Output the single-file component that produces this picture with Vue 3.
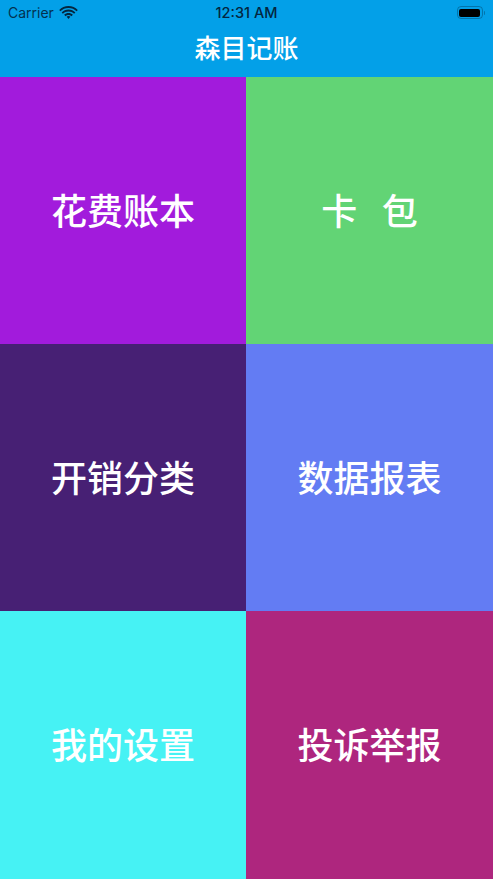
<script setup>
const tiles = [
  { id: 1, label: '花费账本', color: '#a21bdc' },
  { id: 2, label: '卡   包', color: '#62d475' },
  { id: 3, label: '开销分类', color: '#472074' },
  { id: 4, label: '数据报表', color: '#637cf3' },
  { id: 5, label: '我的设置', color: '#46f2f4' },
  { id: 6, label: '投诉举报', color: '#ae267e' },
]
</script>

<template>
  <div class="page">
    <header class="top">
      <div class="status-bar">
        <div class="status-left">
          <span class="carrier">Carrier</span>
          <svg class="wifi" viewBox="0 0 20 14" width="19" height="13">
            <path d="M10 2.2c-3.4 0-6.5 1.3-8.8 3.5L0 4.3C2.6 1.7 6.1 0 10 0s7.4 1.7 10 4.3l-1.2 1.400C16.500 3.500 13.400 2.200 10 2.200z" fill="#04263f" />
            <path d="M10 6c-2.300 0-4.400.9-6 2.400L2.600 6.900C4.600 5 7.200 3.800 10 3.800s5.400 1.200 7.400 3.100L16 8.400C14.400 6.900 12.300 6 10 6z" fill="#04263f" />
            <path d="M10 7.600c1.800 0 3.400.7 4.700 1.900l-1.500 1.600c-.9-.8-2-1.300-3.200-1.300s-2.300.5-3.200 1.300L5.300 9.500C6.600 8.300 8.200 7.600 10 7.600z" fill="#04263f" />
            <path d="M10 10.800c.8 0 1.500.3 2 .8L10 14l-2-2.400c.5-.5 1.200-.8 2-.8z" fill="#04263f" />
          </svg>
        </div>
        <span class="time">12:31 AM</span>
        <div class="battery-wrap">
          <div class="battery">
            <span class="battery-fill"></span>
          </div>
          <span class="battery-nub"></span>
        </div>
      </div>
      <h1 class="title">森目记账</h1>
    </header>

    <main class="grid">
      <div v-for="tile in tiles" :key="tile.id" class="tile" :style="{ background: tile.color }">
        {{ tile.label }}
      </div>
    </main>
  </div>
</template>

<style scoped>
.page {
  width: 493px;
  height: 879px;
  display: flex;
  flex-direction: column;
  overflow: hidden;
  font-family: "Noto Sans CJK SC", "Noto Sans", sans-serif;
}

.top {
  height: 77px;
  flex-shrink: 0;
  background: #03a0e8;
  display: flex;
  flex-direction: column;
}

.status-bar {
  height: 25px;
  padding: 0 8px;
  display: grid;
  grid-template-columns: 1fr auto 1fr;
  align-items: center;
  color: #04263f;
  font-family: Inter, "Liberation Sans", sans-serif;
  font-size: 14px;
}
.status-left { display: flex; align-items: center; gap: 5px; }
.carrier { font-weight: 400; opacity: 0.9; }
.wifi { margin-top: -1px; }
.time { font-size: 14.5px; font-weight: 500; color: #04263f; }

.battery-wrap {
  justify-self: end;
  display: flex;
  align-items: center;
  gap: 1px;
}
.battery {
  width: 26px;
  height: 13px;
  border: 1.5px solid rgba(4, 38, 63, 0.35);
  border-radius: 4px;
  padding: 1.5px;
  box-sizing: border-box;
}
.battery-fill {
  display: block;
  height: 100%;
  background: #000;
  border-radius: 2px;
}
.battery-nub {
  width: 1.5px;
  height: 4px;
  background: rgba(4, 38, 63, 0.35);
  border-radius: 0 1px 1px 0;
}

.title {
  margin: 0;
  flex: 1;
  display: flex;
  align-items: center;
  justify-content: center;
  padding-bottom: 8px;
  color: #fff;
  font-size: 26px;
  font-weight: 500;
  line-height: 1;
}

.grid {
  flex: 1;
  display: grid;
  grid-template-columns: 246px 247px;
  grid-template-rows: 267px 267px 268px;
}

.tile {
  display: flex;
  align-items: center;
  justify-content: center;
  padding-bottom: 4px;
  color: #fff;
  font-size: 36px;
  font-weight: 500;
  white-space: pre;
}
</style>
